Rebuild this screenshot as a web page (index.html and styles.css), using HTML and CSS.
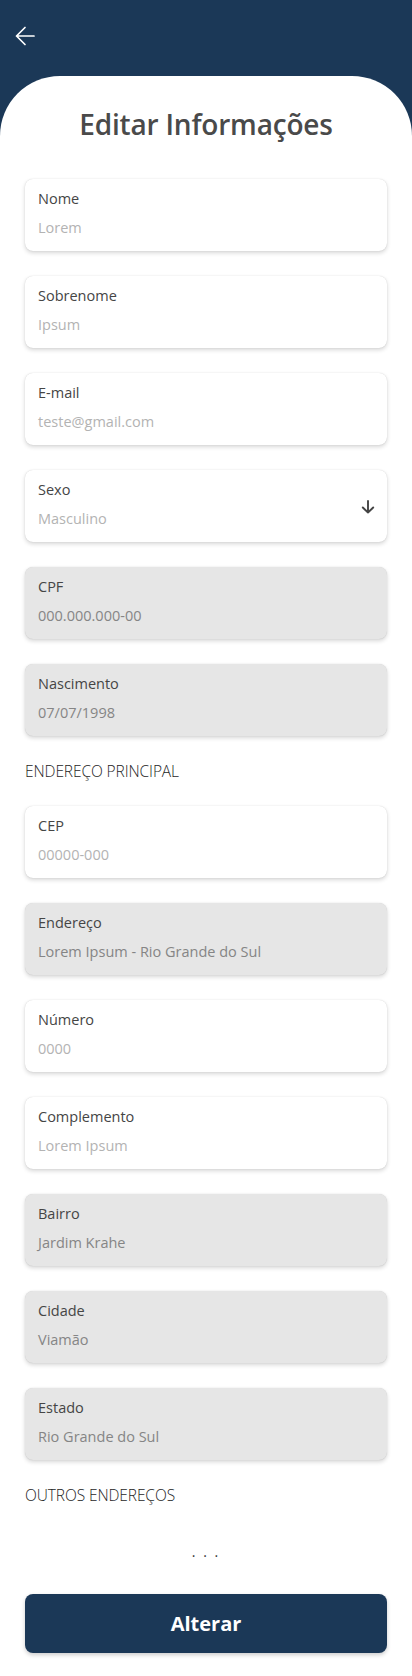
FILE: index.html
```html
<!DOCTYPE html>
<html lang="pt-BR">
<head>
<meta charset="utf-8">
<title>Editar Informações</title>
<link rel="stylesheet" href="styles.css">
</head>
<body>
<div class="page">
  <header class="topbar">
    <button class="back" aria-label="Voltar">
      <svg width="20" height="20" viewBox="0 0 20 20"><path d="M19 10H1.5M10 1.5L1.5 10L10 18.5" fill="none" stroke="#fff" stroke-width="1.7" stroke-linecap="round" stroke-linejoin="round"/></svg>
    </button>
  </header>
  <main class="sheet">
    <h1 class="title">Editar Informações</h1>
    <div class="fields">
      <div class="field"><div class="label">Nome</div><div class="value">Lorem</div></div>
      <div class="field"><div class="label">Sobrenome</div><div class="value">Ipsum</div></div>
      <div class="field"><div class="label">E-mail</div><div class="value">teste@gmail.com</div></div>
      <div class="field select">
        <div class="texts"><div class="label">Sexo</div><div class="value">Masculino</div></div>
        <svg class="caret" width="14" height="14" viewBox="0 0 14 14"><path d="M7 1V12.5M1.8 7.5L7 12.5L12.2 7.5" fill="none" stroke="#444" stroke-width="1.9" stroke-linecap="round" stroke-linejoin="round"/></svg>
      </div>
      <div class="field disabled"><div class="label">CPF</div><div class="value">000.000.000-00</div></div>
      <div class="field disabled"><div class="label">Nascimento</div><div class="value">07/07/1998</div></div>
    </div>
    <h2 class="section">ENDEREÇO PRINCIPAL</h2>
    <div class="fields">
      <div class="field"><div class="label">CEP</div><div class="value">00000-000</div></div>
      <div class="field disabled"><div class="label">Endereço</div><div class="value">Lorem Ipsum - Rio Grande do Sul</div></div>
      <div class="field"><div class="label">Número</div><div class="value">0000</div></div>
      <div class="field"><div class="label">Complemento</div><div class="value">Lorem Ipsum</div></div>
      <div class="field disabled"><div class="label">Bairro</div><div class="value">Jardim Krahe</div></div>
      <div class="field disabled"><div class="label">Cidade</div><div class="value">Viamão</div></div>
      <div class="field disabled"><div class="label">Estado</div><div class="value">Rio Grande do Sul</div></div>
    </div>
    <h2 class="section">OUTROS ENDEREÇOS</h2>
    <div class="more">. . .</div>
    <button class="submit">Alterar</button>
  </main>
</div>
</body>
</html>
```
FILE: styles.css
```css
* { box-sizing: border-box; }
html, body { margin: 0; padding: 0; }
body {
  font-family: "Open Sans", "Noto Sans", sans-serif;
  background: #1b3857;
  color: #333;
}
.page { width: 412px; min-height: 1676px; display: flex; flex-direction: column; }
.topbar { height: 76px; padding: 26px 0 0 15px; }
.back { background: none; border: 0; padding: 0; width: 20px; height: 20px; display: block; cursor: pointer; }
.back svg { display: block; }
.sheet {
  flex: 1;
  background: #fff;
  border-radius: 60px 60px 0 0;
  padding: 28px 25px 24px;
  display: flex;
  flex-direction: column;
}
.title {
  margin: 0 0 35px;
  text-align: center;
  font-size: 28px;
  font-weight: 600;
  line-height: 40px;
  color: #4a4a4a;
  letter-spacing: -0.2px;
}
.fields { display: flex; flex-direction: column; gap: 25px; }
.field {
  height: 72px;
  background: #fff;
  border-radius: 8px;
  box-shadow: 0 0 1px rgba(0,0,0,0.18), 0 2px 4px rgba(0,0,0,0.16);
  padding: 10px 13px 13px;
}
.field.disabled { background: #e6e6e6; }
.label { font-size: 14.5px; line-height: 20px; color: #454545; }
.value { font-size: 14.5px; line-height: 20px; margin-top: 9px; color: #b3b3b3; }
.disabled .value { color: #858585; }
.select { display: flex; align-items: center; justify-content: space-between; padding-right: 12px; }
.caret { display: block; margin-top: 4px; }
.section {
  margin: 25px 0 25px;
  font-size: 15.5px;
  font-weight: 300;
  line-height: 20px;
  color: #1e1e1e;
  letter-spacing: -0.1px;
}
.more {
  text-align: center;
  font-size: 14px;
  line-height: 20px;
  color: #333;
  margin: 12px 0 32px;
  letter-spacing: 2px;
}
.submit {
  height: 59px;
  border: 0;
  border-radius: 8px;
  background: #1b3857;
  color: #fff;
  font-family: "Open Sans", "Noto Sans", sans-serif;
  font-size: 20px;
  font-weight: 700;
  box-shadow: 0 2px 4px rgba(0,0,0,0.2);
  width: 100%;
}
```
